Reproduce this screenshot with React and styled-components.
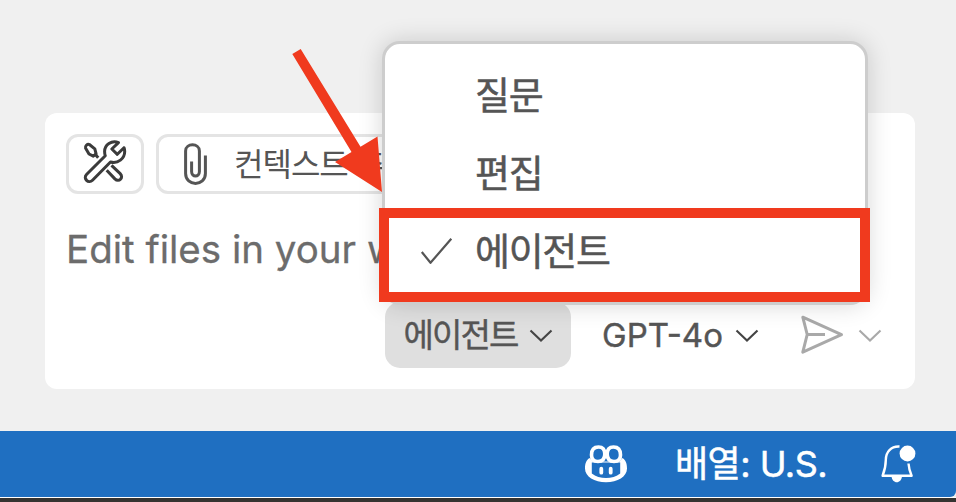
import React from "react";
import styled, { createGlobalStyle } from "styled-components";

const GlobalStyle = createGlobalStyle`
  * { box-sizing: border-box; }
  body {
    margin: 0;
    overflow: hidden;
    font-family: Inter, "Noto Sans CJK KR", sans-serif;
  }
`;

const Screen = styled.div`
  position: relative;
  display: flex;
  flex-direction: column;
  width: 956px;
  height: 502px;
  padding-top: 113px;
  overflow: hidden;
  background: #f0f0f0;
`;

const ChatPanel = styled.section`
  display: flex;
  flex-direction: column;
  flex: none;
  width: 870px;
  height: 276px;
  margin: 0 0 42px 45px;
  padding: 21px 31px 21px 21px;
  border-radius: 12px;
  background: #fff;
`;

const ContextRow = styled.div`
  display: flex;
  gap: 12px;
  height: 60px;
`;

const OutlineButton = styled.button`
  display: flex;
  align-items: center;
  width: ${(p) => p.$width}px;
  height: 60px;
  padding: 0 0 ${(p) => p.$lift || 0}px ${(p) => p.$pad}px;
  border: 3px solid #e4e4e4;
  border-radius: 12px;
  background: #fff;
  color: #555;
  font-family: inherit;
  font-size: 32px;
  letter-spacing: -1px;
  white-space: nowrap;
`;

const ContextLabel = styled.span`
  margin: 2px 0 0 27px;
  line-height: 40px;
`;

const Prompt = styled.div`
  height: 50px;
  margin-top: 30px;
  color: #6c6c6c;
  font-size: 38.5px;
  line-height: 50px;
  letter-spacing: 0;
  white-space: nowrap;
  -webkit-text-stroke: 0.3px currentColor;
`;

const Controls = styled.div`
  display: flex;
  align-items: center;
  height: 66px;
  margin-top: 28px;
  padding-left: 319px;
`;

const PickerButton = styled.button`
  display: flex;
  align-items: center;
  flex: none;
  width: ${(p) => p.$width}px;
  height: 66px;
  padding: 0 0 0 ${(p) => p.$pad}px;
  border: 0;
  border-radius: 15px;
  background: ${(p) => (p.$active ? "#dfdfdf" : "transparent")};
  color: #555;
  font-family: inherit;
  font-size: 33px;
  white-space: nowrap;
  -webkit-text-stroke: 0.4px currentColor;
`;

const PickerLabel = styled.span`
  width: ${(p) => p.$width}px;
  margin-right: ${(p) => p.$gap}px;
  letter-spacing: ${(p) => p.$spacing}px;
  line-height: 40px;
`;

const SendGroup = styled.div`
  display: flex;
  align-items: center;
  gap: 15px;
  margin-left: 30px;
`;

const Icon = styled.svg`
  display: block;
  flex: none;
  overflow: visible;
  fill: none;
  stroke: ${(p) => p.$color};
  stroke-width: ${(p) => p.$stroke || 3};
  stroke-linejoin: round;
`;

const StatusBar = styled.footer`
  display: flex;
  align-items: center;
  flex: none;
  height: 66px;
  padding-left: 585px;
  border-bottom-right-radius: 6px;
  background: #1f6fc1;
  color: #fff;
`;

const StatusText = styled.span`
  width: 153px;
  margin: 0 53px 0 48px;
  font-size: 36px;
  line-height: 50px;
  letter-spacing: -0.5px;
  white-space: nowrap;
  -webkit-text-stroke: 0.5px currentColor;
`;

const WindowEdge = styled.div`
  flex: none;
  height: 5px;
  border-top: 1px solid #fff;
  background: #353331;
`;

const Menu = styled.ul`
  position: absolute;
  left: 382px;
  top: 41px;
  width: 486px;
  height: 264px;
  margin: 0;
  padding: 12px 0;
  list-style: none;
  border: 3px solid #cdcdcd;
  border-radius: 18px;
  background: #fff;
  box-shadow: 0 0 24px rgba(0, 0, 0, 0.16);
`;

const MenuItem = styled.li`
  display: flex;
  align-items: center;
  height: 78px;
  padding-left: 36px;
  color: #555;
  font-size: 38px;
  line-height: 50px;
  letter-spacing: -1.3px;
  -webkit-text-stroke: 0.5px currentColor;
`;

const CheckSlot = styled.span`
  width: 54px;
`;

const Highlight = styled.div`
  position: absolute;
  left: 379px;
  top: 208px;
  width: 491px;
  height: 94px;
  border: 10px solid #f03a1e;
`;

const Arrow = styled.svg`
  position: absolute;
  left: 290px;
  top: 46px;
  fill: #f03a1e;
`;

function Tools() {
  return (
    <Icon width="44" height="44" viewBox="83 139 44 44" $color="#3b3b3b" $stroke={3}>
      <path d="M118.500 142.600C111.500 139.800 104.600 145 104.600 151.500c0 1.500.2 3 .7 4.300L86.500 174.500c-3.800 3.800 2 9.800 6 5.800L110.500 162C118 164 124.700 158.500 124.700 151.500c0-1.500-.2-2.600-.7-3.800L117.300 154.300 111.800 149Z" />
      <path d="M85.500 148c-.7-1.700 1.800-4.500 3.900-3.500l5.400 4.300 1.300 5-2.800 2.400-4.300-2.200Z" />
      <path d="m94.500 153.500 3.700 4.300M106.700 170.200l8.200 8.700c4 4 9.200-1.400 5.300-5.300l-8.700-8.300" />
    </Icon>
  );
}

function Clip() {
  return (
    <Icon width="23" height="43" viewBox="184 142.500 23 43" $color="#555" $stroke={3}>
      <path d="M191.600 161v10c0 6 7.800 6 7.800 0v-20.500c0-8.200-13.800-8.200-13.800 0V173c0 13.200 19.800 13.200 19.800 0v-18" />
    </Icon>
  );
}

function Chevron({ color = "#444" }) {
  return (
    <Icon width="22" height="12" viewBox="0 0 22 12" $color={color} $stroke={2.1}>
      <path d="M.5 1.400 11 11.500 21.500 1.400" strokeLinejoin="miter" />
    </Icon>
  );
}

function Send() {
  return (
    <Icon width="43" height="40" viewBox="801 315 43 40" $color="#a9a9a9" $stroke={3}>
      <path d="M802.800 317.200 841.500 334.700 802.800 352.200 807.200 334.500ZM807 334.500h18" />
    </Icon>
  );
}

function Copilot() {
  return (
    <Icon width="42" height="38" viewBox="585 445 42 38" $color="#fff" $stroke={3.6}>
      <path
        d="M589.500 458c-3 2-4.500 5-4.500 10.500 0 8 9.500 13.800 21 13.800s21-5.800 21-13.800c0-5.500-1.500-8.500-4.500-10.500l-3 3.500H593Z"
        fill="#fff"
        stroke="none"
      />
      <path d="M591.800 462.500h28.400v11c-7.500 6-20.900 6-28.400 0Z" fill="#1f6fc1" stroke="none" />
      <path
        d="M604.800 454c0 5-2.500 7.500-6.800 7.500s-6.500-2.200-6.500-6.500c0-5 2.500-8 7-8 4 0 6.300 2.200 6.300 7ZM607.200 454c0 5 2.500 7.500 6.800 7.500s6.500-2.200 6.500-6.500c0-5-2.500-8-7-8-4 0-6.300 2.200-6.300 7Z"
        fill="#1f6fc1"
      />
      <path d="M601.300 468.700v4M610.700 468.700v4" strokeLinecap="round" strokeWidth="3.800" />
    </Icon>
  );
}

function Bell() {
  return (
    <Icon width="35" height="38" viewBox="881 445 35 38" $color="#fff" $stroke={2.4}>
      <path d="M899.500 446.500c-8.500-.5-13.700 5.500-13.700 13.500 0 7-.8 9.500-3.200 15.800h29c-2.100-5-2.800-7.800-3.100-12.300" />
      <path d="M891.500 476h10.500c-.5 8.300-10 8.300-10.500 0Z" fill="#fff" stroke="none" />
      <circle cx="907.500" cy="453.500" r="7.900" fill="#fff" stroke="none" />
    </Icon>
  );
}

function Check() {
  return (
    <Icon width="31" height="26" viewBox="421 238.500 31 26" $color="#555" $stroke={2.2}>
      <path d="m421.800 252.500 8.700 10.800 20.800-24" />
    </Icon>
  );
}

const modes = [
  { label: "질문" },
  { label: "편집" },
  { label: "에이전트", checked: true },
];

export default function App() {
  return (
    <>
      <GlobalStyle />
      <Screen>
        <ChatPanel>
          <ContextRow>
            <OutlineButton $width={78} $pad={14} $lift={6}>
              <Tools />
            </OutlineButton>
            <OutlineButton $width={300} $pad={25}>
              <Clip />
              <ContextLabel>컨텍스트 추</ContextLabel>
            </OutlineButton>
          </ContextRow>
          <Prompt>Edit files in your w</Prompt>
          <Controls>
            <PickerButton $active $width={186} $pad={18}>
              <PickerLabel $width={115} $gap={12} $spacing={-1.8}>에이전트</PickerLabel>
              <Chevron />
            </PickerButton>
            <PickerButton $width={200} $pad={31}>
              <PickerLabel $width={121} $gap={13} $spacing={0}>GPT-4o</PickerLabel>
              <Chevron />
            </PickerButton>
            <SendGroup>
              <Send />
              <Chevron color="#a9a9a9" />
            </SendGroup>
          </Controls>
        </ChatPanel>
        <StatusBar>
          <Copilot />
          <StatusText>배열: U.S.</StatusText>
          <Bell />
        </StatusBar>
        <WindowEdge />
        <Menu>
          {modes.map((mode) => (
            <MenuItem key={mode.label}>
              <CheckSlot>{mode.checked && <Check />}</CheckSlot>
              {mode.label}
            </MenuItem>
          ))}
        </Menu>
        <Highlight />
        <Arrow width="94" height="148" viewBox="290 46 94 148">
          <path d="M292.300 54 300.700 49 360.500 146.700 377.500 136.500 382 192 335 162 351.500 152Z" />
        </Arrow>
      </Screen>
    </>
  );
}
